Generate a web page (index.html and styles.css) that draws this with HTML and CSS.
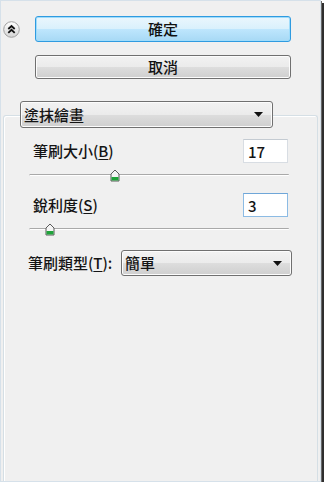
FILE: index.html
```html
<!DOCTYPE html>
<html lang="zh-Hant">
<head>
    <meta charset="UTF-8">
    <meta name="viewport" content="width=device-width, initial-scale=1.0">
    <title>塗抹繪畫</title>
    <link rel="stylesheet" href="styles.css">
</head>
<body>
    <div class="frame">
        <div class="top">
            <button class="collapse" type="button" title="收合">
                <svg width="17" height="17" viewBox="0 0 17 17">
                    <defs>
                        <linearGradient id="cg" x1="0" y1="0" x2="0" y2="1">
                            <stop offset="0" stop-color="#ffffff"/>
                            <stop offset="1" stop-color="#d4d4d4"/>
                        </linearGradient>
                    </defs>
                    <circle cx="8.5" cy="8.5" r="7.8" fill="url(#cg)" stroke="#a0a0a0" stroke-width="1"/>
                    <path d="M5.3 8 L8.5 5 L11.7 8 M5.3 11.8 L8.5 8.8 L11.7 11.8" fill="none" stroke="#111" stroke-width="1.8"/>
                </svg>
            </button>
            <div class="actions">
                <button class="btn btn-ok" type="button">確定</button>
                <button class="btn btn-cancel" type="button">取消</button>
            </div>
        </div>

        <div class="group">
            <div class="combo combo-mode">
                <span>塗抹繪畫</span>
                <svg class="arrow" width="9" height="5" viewBox="0 0 9 5"><polygon points="0,0 9,0 4.5,5" fill="#111"/></svg>
            </div>

            <div class="field">
                <label for="size">筆刷大小(<u>B</u>)</label>
                <input class="num" id="size" type="text" value="17">
            </div>
            <div class="slider">
                <div class="track"></div>
                <svg class="thumb" style="left: 33%" width="10" height="13" viewBox="0 0 10 13">
                    <path d="M1 5 L5 1 L9 5 V12 H1 Z" fill="#f4f4f4" stroke="#5a5a5a" stroke-width="1"/>
                    <rect x="1.5" y="8" width="7" height="3.5" fill="#1fa33a"/>
                </svg>
            </div>

            <div class="field">
                <label for="sharp">銳利度(<u>S</u>)</label>
                <input class="num focused" id="sharp" type="text" value="3">
            </div>
            <div class="slider">
                <div class="track"></div>
                <svg class="thumb" style="left: 8%" width="10" height="13" viewBox="0 0 10 13">
                    <path d="M1 5 L5 1 L9 5 V12 H1 Z" fill="#f4f4f4" stroke="#5a5a5a" stroke-width="1"/>
                    <rect x="1.5" y="8" width="7" height="3.5" fill="#1fa33a"/>
                </svg>
            </div>

            <div class="type-row">
                <label>筆刷類型(<u>T</u>):</label>
                <div class="combo combo-type">
                    <span>簡單</span>
                    <svg class="arrow" width="9" height="5" viewBox="0 0 9 5"><polygon points="0,0 9,0 4.5,5" fill="#111"/></svg>
                </div>
            </div>
        </div>
    </div>
</body>
</html>
```

FILE: styles.css
```css
body {
    margin: 0;
    background: #ffffff;
    font-family: "Noto Sans CJK TC", "Liberation Sans", sans-serif;
    font-size: 15px;
    font-weight: 500;
    color: #141414;
}

.frame {
    box-sizing: border-box;
    width: 321px;
    height: 482px;
    background: #f0f0f0;
    border: 1px solid #d6e1ea;
    box-shadow: 1px 1px 0 #6a6a6a, 3px 3px 0 #2e2e2e;
    display: flex;
    flex-direction: column;
}

.top {
    display: flex;
    align-items: flex-start;
    padding: 15px 0 0 2px;
}

.collapse {
    width: 17px;
    height: 17px;
    padding: 0;
    margin: 5px 0 0 0;
    border: none;
    background: none;
    display: flex;
}

.actions {
    display: flex;
    flex-direction: column;
    gap: 13px;
    margin-left: 15px;
}

.btn {
    width: 256px;
    font-family: inherit;
    font-size: 15px;
    font-weight: 500;
    line-height: 20px;
    color: #111;
    border-radius: 3px;
    padding: 0;
}

.btn-ok {
    height: 26px;
    border: 1px solid #2f9be0;
    background: linear-gradient(#eaf6fd, #d9f0fc 50%, #bee6fd 51%, #a7d9f5);
    box-shadow: inset 0 0 0 1px #9fdcfb;
}

.btn-cancel {
    height: 24px;
    border: 1px solid #707070;
    background: linear-gradient(#f2f2f2, #ebebeb 50%, #dddddd 51%, #cfcfcf);
    box-shadow: inset 0 0 0 1px #fcfcfc;
}

.group {
    flex: 1;
    margin: 36px 2px 0 2px;
    border: 1px solid #d5dfe5;
    border-bottom: none;
    border-radius: 3px 3px 0 0;
    box-shadow: inset 1px 1px 0 #ffffff;
}

.combo {
    box-sizing: border-box;
    display: flex;
    align-items: center;
    justify-content: space-between;
    border: 1px solid #707070;
    border-radius: 3px;
    background: linear-gradient(#f2f2f2, #ebebeb 50%, #dddddd 51%, #cfcfcf);
    box-shadow: inset 0 0 0 1px #fcfcfc;
    padding: 0 9px 0 3px;
    line-height: 20px;
}

.combo-mode {
    width: 253px;
    height: 27px;
    margin: -15px 0 0 16px;
}

.arrow {
    flex: none;
}

.field {
    display: flex;
    align-items: center;
    justify-content: space-between;
    padding: 0 29px 0 29px;
    margin-top: 11px;
}

.field + .slider + .field {
    margin-top: 10px;
}

label {
    line-height: 20px;
}

label u {
    text-underline-offset: 2px;
}

.num {
    box-sizing: border-box;
    width: 45px;
    height: 24px;
    border: 1px solid #d8dde3;
    border-top-color: #c4cbd2;
    background: #ffffff;
    font-family: inherit;
    font-size: 15px;
    font-weight: 500;
    color: #141414;
    padding: 0 4px;
    outline: none;
}

.num.focused {
    border-color: #8cbbe4;
    border-top-color: #6fa6d8;
}

.slider {
    position: relative;
    height: 16px;
    margin: 4px 28px 0 25px;
}

.track {
    position: absolute;
    left: 0;
    right: 0;
    top: 7px;
    height: 2px;
    border-top: 1px solid #a9a9a9;
    border-bottom: 1px solid #ffffff;
    border-left: 1px solid #c2c2c2;
    border-radius: 2px;
    box-sizing: border-box;
}

.thumb {
    position: absolute;
    top: 2px;
    margin-left: -5px;
}

.type-row {
    display: flex;
    align-items: center;
    margin-top: 13px;
    padding-left: 24px;
}

.type-row label {
    width: 93px;
}

.combo-type {
    width: 171px;
    height: 26px;
}
```
